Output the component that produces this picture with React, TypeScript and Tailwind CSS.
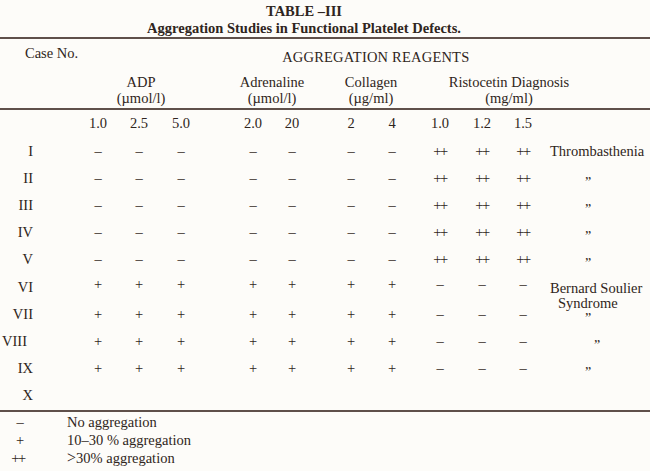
import React from 'react';

type Row = {
  label: string;
  values: string[];
  diag?: 'thromb' | 'bernard' | 'ditto';
  shift?: boolean;
};

const colClasses = [
  'ml-[45px] w-[40px]',
  'w-[42px]',
  'w-[42px]',
  'ml-[30px] w-[42px]',
  'w-[36px]',
  'ml-[20px] w-[42px]',
  'w-[40px]',
  'w-[56px]',
  'w-[28px]',
  'w-[54px]',
];

const neg = ['–', '–', '–', '–', '–', '–', '–', '++', '++', '++'];
const pos = ['+', '+', '+', '+', '+', '+', '+', '–', '–', '–'];

const rows: Row[] = [
  { label: 'I', values: neg, diag: 'thromb' },
  { label: 'II', values: neg, diag: 'ditto' },
  { label: 'III', values: neg, diag: 'ditto' },
  { label: 'IV', values: neg, diag: 'ditto' },
  { label: 'V', values: neg, diag: 'ditto' },
  { label: 'VI', values: pos, diag: 'bernard' },
  { label: 'VII', values: pos, diag: 'ditto' },
  { label: 'VIII', values: pos, diag: 'ditto', shift: true },
  { label: 'IX', values: pos, diag: 'ditto' },
  { label: 'X', values: [] },
];

const concentrations = ['1.0', '2.5', '5.0', '2.0', '20', '2', '4', '1.0', '1.2', '1.5'];

const Rule = () => <div className="h-[2px] w-full bg-[#5f504a]" />;

const Diagnosis: React.FC<{ kind?: Row['diag']; shift?: boolean }> = ({ kind, shift }) => {
  if (kind === 'thromb') return <div className="w-[100px] whitespace-nowrap">Thrombasthenia</div>;
  if (kind === 'bernard')
    return (
      <div className="w-[100px] h-[27px] whitespace-nowrap leading-[15px] pt-[7px]">
        <div>Bernard Soulier</div>
        <div className="pl-[8px]">Syndrome</div>
      </div>
    );
  if (kind === 'ditto')
    return (
      <div className={shift ? 'w-[100px] pl-[44px]' : 'w-[100px] pl-[35px]'}>
        <span className="inline-block translate-y-[4px] text-[14px] leading-[14px]">”</span>
      </div>
    );
  return <div className="w-[100px]" />;
};

const App: React.FC = () => {
  return (
    <div className="w-[650px] h-[471px] overflow-hidden bg-[#fdfcf9] text-[#2f2520] font-['Liberation_Serif',serif] text-[14.5px]">
      {/* title */}
      <div className="pt-[3px] pr-[42px] text-center font-bold">
        <div className="text-[14.5px] leading-[17px]">TABLE –III</div>
        <div className="text-[14.5px] leading-[16px]">Aggregation Studies in Functional Platelet Defects.</div>
      </div>
      <div className="mt-[1px]">
        <Rule />
      </div>

      {/* header */}
      <div className="flex h-[35px]">
        <div className="pl-[25px] pt-[6px] leading-[17px]">Case No.</div>
        <div className="ml-[204px] pt-[10px] leading-[17px] tracking-[0.2px]">AGGREGATION REAGENTS</div>
      </div>
      <div className="flex h-[34px] leading-[16px] text-center">
        <div className="ml-[100px] w-[82px]">
          <div>ADP</div>
          <div>(µmol/l)</div>
        </div>
        <div className="ml-[50px] w-[80px]">
          <div>Adrenaline</div>
          <div>(µmol/l)</div>
        </div>
        <div className="ml-[19px] w-[80px]">
          <div>Collagen</div>
          <div>(µg/ml)</div>
        </div>
        <div className="ml-[37px] w-[122px] whitespace-nowrap">
          <div>Ristocetin Diagnosis</div>
          <div>(mg/ml)</div>
        </div>
      </div>
      <Rule />

      {/* concentrations */}
      <div className="flex h-[28px] items-center">
        <div className="w-[33px]" />
        {concentrations.map((c, i) => (
          <div key={i} className={`${colClasses[i]} text-center`}>
            {c}
          </div>
        ))}
      </div>

      {/* cases */}
      {rows.map((r) => (
        <div key={r.label} className="flex h-[27.2px] items-center">
          <div className="w-[33px] text-right">{r.label}</div>
          <div className={r.shift ? 'flex pl-[6px]' : 'flex'}>
            {r.values.map((v, i) => (
              <div
                key={i}
                className={`${colClasses[i]} text-center ${v === '++' ? 'tracking-[-1.5px]' : ''}`}
              >
                {v}
              </div>
            ))}
            {r.values.length > 0 && <Diagnosis kind={r.diag} shift={r.shift} />}
          </div>
        </div>
      ))}
      <Rule />

      {/* legend */}
      <div className="pt-[1px] leading-[18px]">
        <div className="flex h-[18px]">
          <div className="w-[40px] text-center">–</div>
          <div className="ml-[27px]">No aggregation</div>
        </div>
        <div className="flex h-[18px]">
          <div className="w-[40px] text-center">+</div>
          <div className="ml-[27px]">10–30 % aggregation</div>
        </div>
        <div className="flex h-[18px]">
          <div className="w-[36px] text-center tracking-[-1.5px]">++</div>
          <div className="ml-[31px]">
            <span className="text-[16px]">&gt;</span>30% aggregation
          </div>
        </div>
      </div>
    </div>
  );
};

export default App;
